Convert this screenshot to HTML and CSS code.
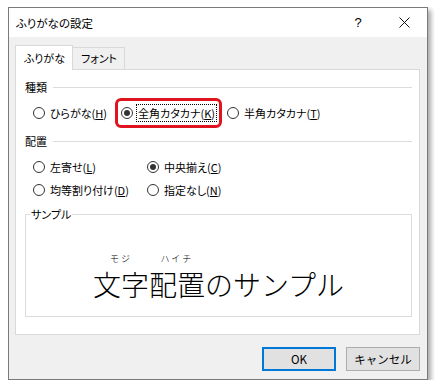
FILE: index.html
```html
<!DOCTYPE html>
<html>
  <head>
    <meta charset="UTF-8">
    <link rel="stylesheet" href="styles.css">
  </head>
  <body>
    <div class="dialog">
      <div class="titlebar">
        <span class="title">ふりがなの設定</span>
        <span class="caption-btn help">?</span>
        <span class="caption-btn close">
          <svg width="11" height="11" viewBox="0 0 11 11"><path d="M0.5 0.5 L10.5 10.5 M10.5 0.5 L0.5 10.5" stroke="#111" stroke-width="1" fill="none"/></svg>
        </span>
      </div>
      <div class="body">
        <div class="tabs">
          <span class="tab tab-active">ふりがな</span>
          <span class="tab">フォント</span>
        </div>
        <div class="panel">
          <div class="group-head"><span>種類</span><span class="rule"></span></div>
          <div class="row-type">
            <span class="radio"><span class="dot"></span><span>ひらがな(<u>H</u>)</span></span>
            <span class="mark">
              <span class="radio checked"><span class="dot"></span><span class="focus">全角カタカナ(<u>K</u>)</span></span>
            </span>
            <span class="radio"><span class="dot"></span><span>半角カタカナ(<u>T</u>)</span></span>
          </div>
          <div class="group-head"><span>配置</span><span class="rule"></span></div>
          <div class="align-grid">
            <span class="radio"><span class="dot"></span><span>左寄せ(<u>L</u>)</span></span>
            <span class="radio checked"><span class="dot"></span><span>中央揃え(<u>C</u>)</span></span>
            <span class="radio"><span class="dot"></span><span>均等割り付け(<u>D</u>)</span></span>
            <span class="radio"><span class="dot"></span><span>指定なし(<u>N</u>)</span></span>
          </div>
          <fieldset class="sample">
            <legend>サンプル</legend>
            <div class="sample-text">
              <ruby>文字<rt>モジ</rt></ruby><ruby>配置<rt>ハイチ</rt></ruby><span>のサンプル</span>
            </div>
          </fieldset>
        </div>
        <div class="buttons">
          <button class="btn btn-default">OK</button>
          <button class="btn">キャンセル</button>
        </div>
      </div>
    </div>
  </body>
</html>
```

FILE: styles.css
```css
body {
  margin: 7px 0 0 8px;
  background: white;
  font-family: "Noto Sans CJK JP", "Noto Sans", sans-serif;
  font-size: 11px;
  color: black;
  font-feature-settings: "palt";
}
.dialog {
  width: 418px;
  border: 1px solid #7a7a7a;
  box-shadow: 3px 3px 5px rgba(0, 0, 0, 0.35);
  background: #f0f0f0;
}
.titlebar {
  display: flex;
  align-items: center;
  height: 29px;
  background: white;
  font-size: 11.5px;
}
.title {
  flex: 1;
  padding-left: 7px;
}
.caption-btn {
  width: 46px;
  height: 29px;
  display: flex;
  align-items: center;
  justify-content: center;
}
.help {
  font-family: "Liberation Sans", sans-serif;
  font-size: 13px;
}
.body {
  display: flex;
  flex-direction: column;
  height: 342px;
  padding: 8px 7px 0 6px;
  box-sizing: border-box;
}
.tabs {
  display: flex;
  align-items: flex-end;
  height: 24px;
}
.tab {
  height: 22px;
  line-height: 21px;
  padding: 0 7px 0 8px;
  border: 1px solid #d9d9d9;
  border-bottom: none;
  box-sizing: border-box;
}
.tab-active {
  height: 25px;
  line-height: 24px;
  padding: 0 7px 0 8px;
  background: white;
  position: relative;
  top: 1px;
  z-index: 1;
}
.tabs .tab + .tab {
  border-left: none;
}
.panel {
  height: 266px;
  box-sizing: border-box;
  background: white;
  border: 1px solid #d9d9d9;
  padding: 9px 7px 0 9px;
}
.group-head {
  display: flex;
  align-items: center;
  gap: 6px;
  height: 16px;
  line-height: 16px;
}
.rule {
  flex: 1;
  height: 1px;
  background: #dcdcdc;
}
.row-type {
  display: flex;
  align-items: center;
  height: 32px;
  margin: 2px 0 4px 8px;
}
.radio {
  display: inline-flex;
  align-items: center;
  gap: 5px;
  line-height: 16px;
  white-space: nowrap;
}
.dot {
  width: 10px;
  height: 10px;
  border: 1px solid #333;
  border-radius: 50%;
  display: flex;
  align-items: center;
  justify-content: center;
}
.checked .dot::after {
  content: "";
  width: 6px;
  height: 6px;
  border-radius: 50%;
  background: #333;
}
.mark {
  display: inline-flex;
  align-items: center;
  margin: 0 5px 0 8px;
  padding: 3px 2px 3px 3px;
  border: 3px solid #e0141e;
  border-radius: 6px;
}
.mark .radio {
  gap: 3px;
}
.focus {
  border: 1px dotted #000;
  padding: 0 1px;
}
.align-grid {
  display: grid;
  grid-template-columns: 114px auto;
  grid-auto-rows: 23px;
  align-items: center;
  margin: 6px 0 0 8px;
}
.sample {
  margin: 6px 0 0 0;
  padding: 0;
  border: 1px solid #dcdcdc;
  height: 110px;
  box-sizing: border-box;
}
.sample legend {
  margin-left: 4px;
  padding: 0 1px;
  line-height: 14px;
}
.sample-text {
  display: flex;
  justify-content: center;
  align-items: flex-end;
  font-size: 28px;
  font-weight: 300;
  font-feature-settings: normal;
  line-height: 34px;
  height: 80px;
}
.sample-text ruby {
  display: flex;
  flex-direction: column;
  align-items: center;
}
.sample-text rt {
  display: block;
  order: -1;
  font-size: 9px;
  line-height: 12px;
  letter-spacing: 2px;
  margin-bottom: 2px;
}
.buttons {
  display: flex;
  justify-content: flex-end;
  gap: 10px;
  margin-top: 12px;
}
.btn {
  width: 74px;
  height: 24px;
  font-family: inherit;
  font-size: 11.5px;
  background: #e1e1e1;
  border: 1px solid #adadad;
  padding: 0;
  color: black;
}
.btn-default {
  border: 2px solid #0078d7;
}
```
